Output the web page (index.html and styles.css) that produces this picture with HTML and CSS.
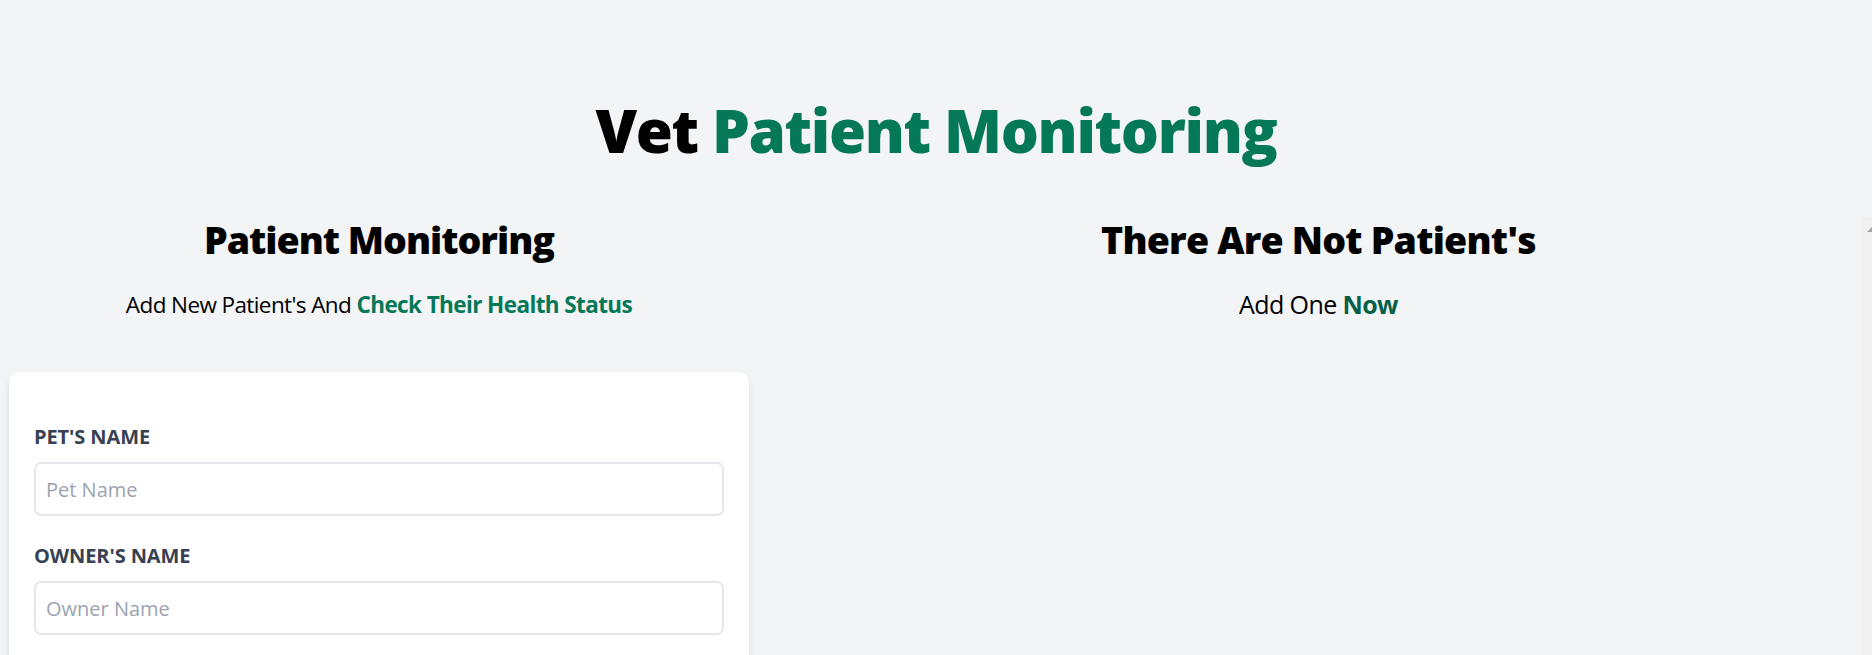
FILE: index.html
```html
<!DOCTYPE html>
<html lang="en">
<head>
<meta charset="utf-8">
<title>Vet Patient Monitoring</title>
<link rel="stylesheet" href="styles.css">
</head>
<body>
<main class="page">
  <h1 class="title">Vet <span class="accent">Patient Monitoring</span></h1>
  <div class="columns">
    <section class="form-col">
      <h2 class="col-title">Patient Monitoring</h2>
      <p class="col-sub">Add New Patient's And <span class="accent-bold">Check Their Health Status</span></p>
      <form class="card">
        <div class="field">
          <label class="label" for="pet">Pet's Name</label>
          <input class="input" id="pet" type="text" placeholder="Pet Name">
        </div>
        <div class="field">
          <label class="label" for="owner">Owner's Name</label>
          <input class="input" id="owner" type="text" placeholder="Owner Name">
        </div>
      </form>
    </section>
    <section class="list-col">
      <div class="list-content">
        <h2 class="col-title col-title-wide">There Are Not Patient's</h2>
        <p class="col-sub col-sub-lg">Add One <span class="accent-dark">Now</span></p>
      </div>
      <div class="scroll-track"><span class="scroll-arrow"></span></div>
    </section>
  </div>
</main>
</body>
</html>
```
FILE: styles.css
```css
* { box-sizing: border-box; }
html, body {
  margin: 0;
  height: 100%;
  overflow: hidden;
}
body {
  background: #f3f4f6;
  font-family: "Open Sans", "Noto Sans", sans-serif;
  color: #000;
}
.page {
  padding-top: 100px;
}
.title {
  margin: 0;
  font-size: 60px;
  line-height: 60px;
  font-weight: 800;
  letter-spacing: -1.35px;
  text-align: center;
}
.accent { color: #047857; }
.accent-bold { color: #047857; font-weight: 700; }
.accent-dark { color: #065f46; font-weight: 700; }

.columns {
  margin-top: 57px;
  display: grid;
  grid-template-columns: 740px 1fr;
  column-gap: 26px;
  padding-left: 9px;
}
.col-title {
  margin: 0;
  font-size: 37.5px;
  line-height: 45px;
  font-weight: 800;
  letter-spacing: -1px;
  text-align: center;
}
.col-title-wide { letter-spacing: -0.8px; }
.col-sub {
  margin: 25px 0 50px;
  font-size: 22.5px;
  line-height: 35px;
  letter-spacing: -0.6px;
  text-align: center;
}
.col-sub-lg {
  font-size: 25px;
  line-height: 35px;
}
.card {
  background: #fff;
  border-radius: 10px;
  box-shadow: 0 5px 8px -1px rgba(0,0,0,0.1), 0 2px 5px -2px rgba(0,0,0,0.1);
  padding: 50px 25px 200px;
}
.field { margin-bottom: 25px; }
.label {
  display: block;
  color: #374151;
  text-transform: uppercase;
  font-weight: 700;
  font-size: 20px;
  line-height: 30px;
  letter-spacing: -0.1px;
}
.input {
  display: block;
  width: 100%;
  margin-top: 10px;
  padding: 10px;
  border: 2px solid #e5e7eb;
  border-radius: 7px;
  font-family: inherit;
  font-size: 20px;
  line-height: 30px;
  height: 54px;
  color: #111;
  background: #fff;
}
.input::placeholder { color: #9ca3af; }
.list-col {
  display: flex;
  height: calc(100vh - 217px);
}
.list-content {
  flex: 1;
}
.scroll-track {
  width: 10px;
  background: #f1f1f1;
  display: flex;
  justify-content: flex-end;
  padding-top: 10px;
}
.scroll-arrow {
  width: 0;
  height: 0;
  border-left: 5px solid transparent;
  border-bottom: 5px solid #a3a3a3;
}
```
